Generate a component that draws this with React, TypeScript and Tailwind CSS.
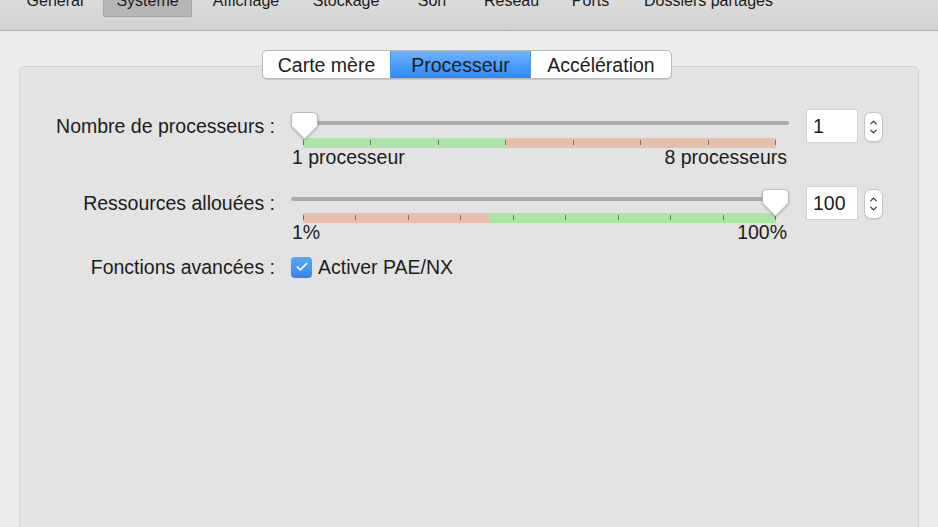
import { Check, ChevronDown, ChevronUp } from "lucide-react";

const font = { fontFamily: '"Liberation Sans", Arial, sans-serif' };

const tabs = [
  { label: "Général", w: "w-[90px]" },
  { label: "Système", w: "w-[89px]", active: true },
  { label: "Affichage", w: "w-[108px]" },
  { label: "Stockage", w: "w-[92px]" },
  { label: "Son", w: "w-[80px]" },
  { label: "Réseau", w: "w-[79px]" },
  { label: "Ports", w: "w-[79px]" },
  { label: "Dossiers partagés", w: "w-[157px]" },
];

const Thumb = ({ left }: { left: string }) => (
  <svg
    className={`absolute top-[3px] ${left} drop-shadow-[0_1px_1px_rgba(0,0,0,0.25)]`}
    width="27"
    height="28"
    viewBox="0 0 27 28"
  >
    <path
      d="M4.5 0.5H22.5A4 4 0 0 1 26.5 4.5V14L13.5 27L0.5 14V4.5A4 4 0 0 1 4.5 0.5Z"
      fill="#ffffff"
      stroke="#b9b9b9"
    />
  </svg>
);

const Ticks = ({ count }: { count: number }) => (
  <div className="absolute inset-0 flex justify-between">
    {Array.from({ length: count }).map((_, i) => (
      <div key={i} className="w-px h-[5px] mt-[2px] bg-[#6f6f6f]" />
    ))}
  </div>
);

const Stepper = ({ value }: { value: string }) => (
  <div className="flex items-start">
    <div className="w-[52px] h-[34px] bg-white border border-[#d2d2d2] pl-[6px] flex items-center text-[19.5px] leading-[22px]">
      {value}
    </div>
    <div className="ml-[6px] mt-[3px] w-[19px] h-[30px] bg-white border border-[#c4c4c4] rounded-[7px] flex flex-col items-center justify-center shadow-[0_1px_1px_rgba(0,0,0,0.08)]">
      <ChevronUp className="w-[11px] h-[11px] -mb-[1px] text-[#333]" strokeWidth={2.5} />
      <ChevronDown className="w-[11px] h-[11px] -mt-[1px] text-[#333]" strokeWidth={2.5} />
    </div>
  </div>
);

export default function App() {
  return (
    <div style={font} className="w-[938px] h-[527px] overflow-hidden bg-[#ececec] text-[#1c1c1c]">
      {/* Toolbar */}
      <div className="h-[31px] bg-gradient-to-b from-[#dbdbdb] to-[#d2d2d2] border-b border-[#b0b0b0] flex pl-[10px]">
        {tabs.map((t) => (
          <div
            key={t.label}
            className={`${t.w} h-[17px] flex justify-center ${
              t.active ? "bg-[#b6b6b6] border-x border-b border-[#a5a5a5] rounded-b-[2px] ml-[3px]" : ""
            }`}
          >
            <span className="text-[16px] leading-[18px] -mt-[8px]">{t.label}</span>
          </div>
        ))}
      </div>

      <div className="flex flex-col items-center pt-[19px]">
        {/* Segmented control */}
        <div className="relative z-10 mr-[4px] flex h-[29px] border border-[#b8b8b8] rounded-[5px] bg-white shadow-[0_1px_1px_rgba(0,0,0,0.12)] overflow-hidden text-[19.5px] leading-[22px]">
          <div className="w-[127px] flex items-center justify-center">Carte mère</div>
          <div className="w-[141px] flex items-center justify-center bg-gradient-to-b from-[#6db3fb] to-[#2a89f8] border-x border-[#4a95ee]">
            Processeur
          </div>
          <div className="w-[140px] flex items-center justify-center">Accélération</div>
        </div>

        {/* Panel */}
        <div className="-mt-[13px] w-[900px] h-[480px] bg-[#e3e3e3] border border-[#d3d3d3] rounded-[5px] pt-[42px] text-[19.5px] leading-[22px]">
          {/* Row 1 */}
          <div className="flex items-start">
            <div className="w-[255px] h-[34px] flex items-center justify-end">Nombre de processeurs :</div>
            <div className="relative ml-[16px] w-[498px]">
              <div className="mt-[12px] h-[4px] rounded-full bg-[#ababab]" />
              <div className="relative ml-[12px] mt-[13px] w-[473px] h-[10px] flex">
                <div className="w-[203px] bg-[#ace6a7]" />
                <div className="flex-1 bg-[#e8bfaa]" />
                <Ticks count={8} />
              </div>
              <div className="flex justify-between pl-[1px] pr-[2px] -mt-[1px] leading-[20px]">
                <span>1 processeur</span>
                <span>8 processeurs</span>
              </div>
              <Thumb left="left-[0px]" />
            </div>
            <div className="ml-[17px]">
              <Stepper value="1" />
            </div>
          </div>

          {/* Row 2 */}
          <div className="flex items-start mt-[19px]">
            <div className="w-[255px] h-[34px] flex items-center justify-end">Ressources allouées :</div>
            <div className="relative ml-[16px] w-[498px]">
              <div className="mt-[11px] h-[4px] rounded-full bg-[#ababab]" />
              <div className="relative ml-[12px] mt-[12px] w-[473px] h-[10px] flex">
                <div className="w-[186px] bg-[#e8bfaa]" />
                <div className="flex-1 bg-[#ace6a7]" />
                <Ticks count={10} />
              </div>
              <div className="flex justify-between pl-[1px] pr-[2px] -mt-[1px] leading-[20px]">
                <span>1%</span>
                <span>100%</span>
              </div>
              <Thumb left="left-[471px]" />
            </div>
            <div className="ml-[17px]">
              <Stepper value="100" />
            </div>
          </div>

          {/* Row 3 */}
          <div className="flex items-center mt-[14px] h-[22px]">
            <div className="w-[255px] text-right">Fonctions avancées :</div>
            <div className="ml-[16px] flex items-center">
              <div className="w-[21px] h-[21px] rounded-[4px] bg-gradient-to-b from-[#5aa6fa] to-[#2f86f3] flex items-center justify-center">
                <Check className="w-[14px] h-[14px] text-white" strokeWidth={3} />
              </div>
              <span className="ml-[6px]">Activer PAE/NX</span>
            </div>
          </div>
        </div>
      </div>
    </div>
  );
}
